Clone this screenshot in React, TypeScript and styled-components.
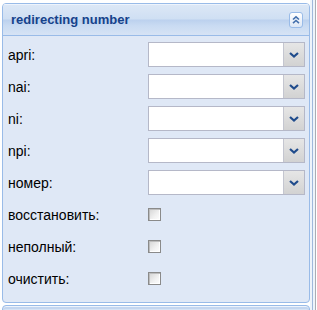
import React, { FC } from 'react'
import styled, { createGlobalStyle } from 'styled-components'

const GlobalStyle = createGlobalStyle`
  html, body {
    margin: 0;
    padding: 0;
    background: #ffffff;
    overflow: hidden;
    font-family: "Liberation Sans", Arial, sans-serif;
  }
`

const Page = styled.div`
  display: flex;
  width: 317px;
  height: 310px;
  overflow: hidden;
`

const Column = styled.div`
  flex: 1;
  display: flex;
  flex-direction: column;
  gap: 2px;
  padding: 3px 0 0 2px;
`

const Rail = styled.div`
  width: 7px;
  background: linear-gradient(
    to right,
    #eef3fa 0 2px,
    #9fb7db 2px 3px,
    #eef3fa 3px 5px,
    #a9acb3 5px 6px,
    #ffffff 6px
  );
`

const Panel = styled.div`
  border: 1px solid #99bbe8;
  border-radius: 4px;
  background: #dfe8f6;
  overflow: hidden;
  flex-shrink: 0;
`

const Header = styled.div`
  height: 31px;
  display: flex;
  align-items: center;
  justify-content: space-between;
  padding: 0 6px 0 8px;
  border-bottom: 1px solid #99bbe8;
  box-shadow: inset 0 1px 0 #eef4fc;
  background: linear-gradient(
    to bottom,
    #dde8f6 0%,
    #cfdff3 48%,
    #bcd1ee 52%,
    #c9dbf2 70%,
    #d6e3f5 100%
  );
`

const Title = styled.span`
  font-size: 13px;
  font-weight: bold;
  color: #15428b;
`

const Toggle = styled.span`
  width: 12px;
  height: 14px;
  border: 1px solid #99bbe8;
  border-radius: 3px;
  background: linear-gradient(to bottom, #ffffff, #dce7f6);
  display: flex;
  align-items: center;
  justify-content: center;
`

const Body = styled.div`
  display: flex;
  flex-direction: column;
  gap: 7px;
  padding: 6px 4px 11px 5px;
`

const Row = styled.div`
  height: 25px;
  display: flex;
  align-items: center;
`

const Label = styled.span`
  width: 140px;
  font-size: 14px;
  color: #000;
`

const Combo = styled.div`
  width: 155px;
  height: 23px;
  display: flex;
  border: 1px solid #b5b8c8;
  background: #fff;
`

const ComboInput = styled.div`
  flex: 1;
`

const Trigger = styled.div`
  width: 20px;
  border-left: 1px solid #c4c6d0;
  background: linear-gradient(to bottom, #e6e6e6, #d2d2d2);
  display: flex;
  align-items: center;
  justify-content: center;
`

const Check = styled.span`
  width: 11px;
  height: 11px;
  border: 1px solid #8a8a8a;
  background: linear-gradient(135deg, #d4d4d4 0%, #f2f2f2 60%, #ffffff 100%);
  box-shadow: inset 1px 1px 0 #bdbdbd, inset -1px -1px 0 #ffffff;
`

const NextPanel = styled(Panel)`
  height: 20px;
  box-shadow: inset 0 1px 0 #eef4fc, inset 0 3px 0 #c3d6f0;
  background: #d6e3f5;
`

const combos = ['apri:', 'nai:', 'ni:', 'npi:', 'номер:']
const checks = ['восстановить:', 'неполный:', 'очистить:']

const ComboField: FC = () => (
  <Combo>
    <ComboInput />
    <Trigger>
      <svg width="10" height="6" viewBox="0 0 10 6">
        <path d="M1 1 L5 4.5 L9 1" fill="none" stroke="#204c8c" strokeWidth="2.2" />
      </svg>
    </Trigger>
  </Combo>
)

export default function App() {
  return (
    <Page>
      <GlobalStyle />
      <Column>
        <Panel>
          <Header>
            <Title>redirecting number</Title>
            <Toggle>
              <svg width="10" height="10" viewBox="0 0 10 10">
                <path d="M2 4.5 L5 1.8 L8 4.5 M2 8.2 L5 5.5 L8 8.2" fill="none" stroke="#4470ad" strokeWidth="1.6" />
              </svg>
            </Toggle>
          </Header>
          <Body>
            {combos.map((label) => (
              <Row key={label}>
                <Label>{label}</Label>
                <ComboField />
              </Row>
            ))}
            {checks.map((label) => (
              <Row key={label}>
                <Label>{label}</Label>
                <Check />
              </Row>
            ))}
          </Body>
        </Panel>
        <NextPanel />
      </Column>
      <Rail />
    </Page>
  )
}
